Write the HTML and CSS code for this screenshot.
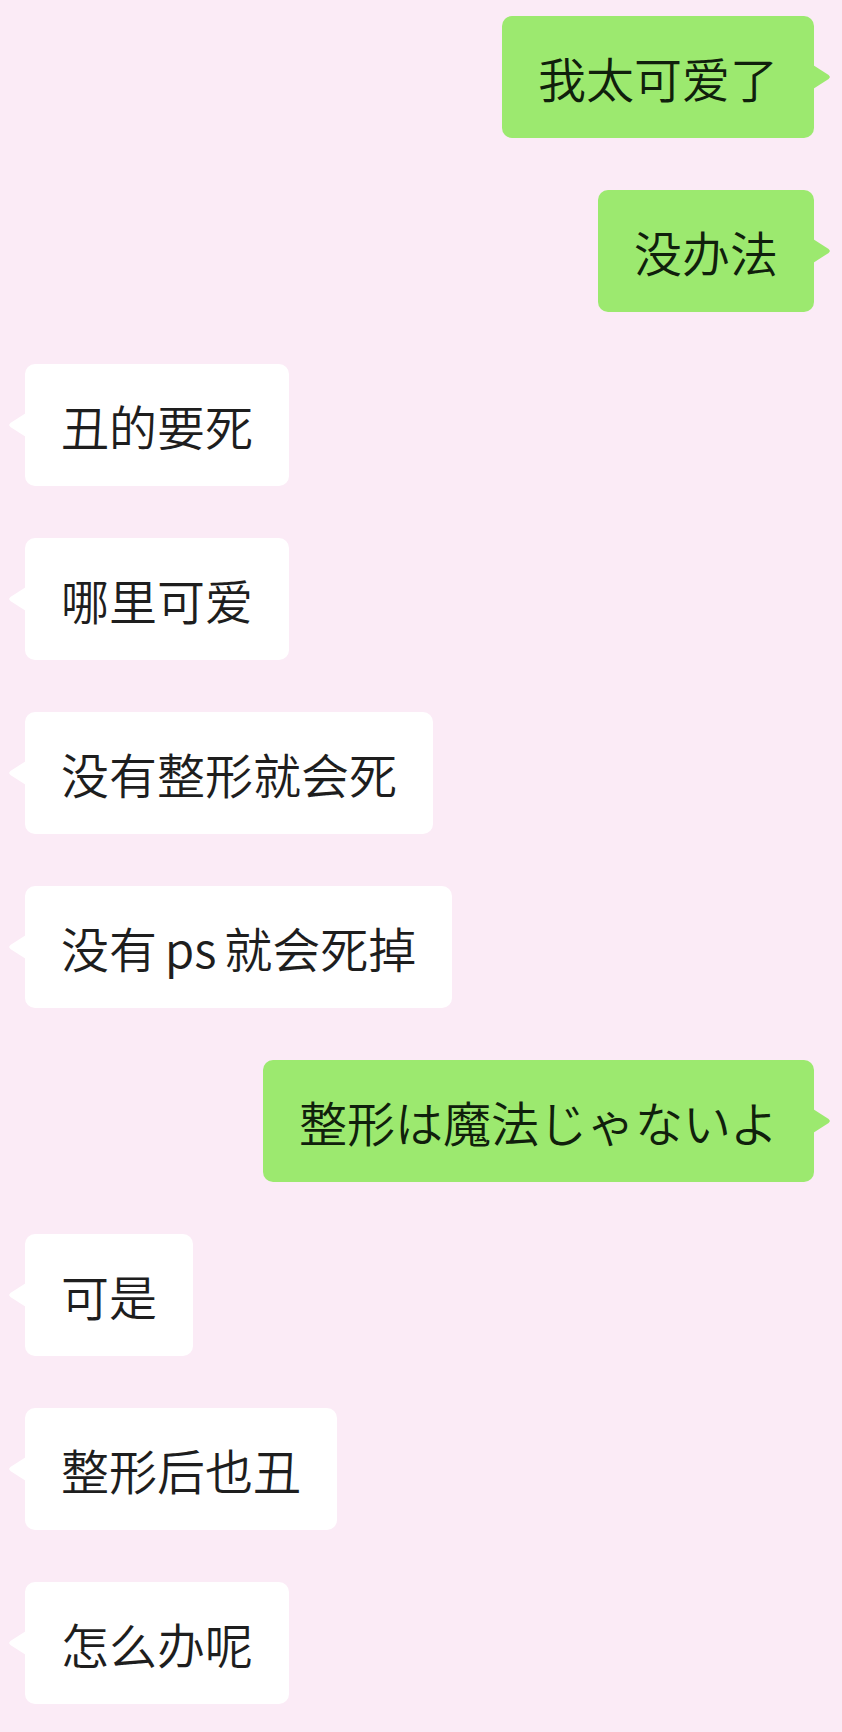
FILE: index.html
```html
<!DOCTYPE html>
<html lang="zh-CN">
<head>
	<meta charset="UTF-8">
	<title>聊天</title>
	<link rel="stylesheet" href="styles.css">
</head>
<body>
<div class="chat">
  <div class="row me"><div class="bubble">我太可爱了</div></div>
  <div class="row me"><div class="bubble">没办法</div></div>
  <div class="row you"><div class="bubble">丑的要死</div></div>
  <div class="row you"><div class="bubble">哪里可爱</div></div>
  <div class="row you"><div class="bubble">没有整形就会死</div></div>
  <div class="row you"><div class="bubble">没有 ps 就会死掉</div></div>
  <div class="row me"><div class="bubble" lang="ja">整形は魔法じゃないよ</div></div>
  <div class="row you"><div class="bubble">可是</div></div>
  <div class="row you"><div class="bubble">整形后也丑</div></div>
  <div class="row you"><div class="bubble">怎么办呢</div></div>
</div>
</body>
</html>
```

FILE: styles.css
```css
* {
  margin: 0;
  padding: 0
}

body {
  background-color: #fbebf6;
  font-family: "Noto Sans CJK SC", "Noto Sans CJK JP", sans-serif;
}

.chat {
  display: flex;
  flex-direction: column;
  gap: 52px;
  padding: 16px 28px 0 25px;
}

.row {
  display: flex;
}

.row.me {
  justify-content: flex-end;
}

.bubble {
  position: relative;
  padding: 28px 36px;
  font-size: 48px;
  font-weight: 350;
  line-height: 66px;
  word-spacing: -3px;
  color: #1e1e1e;
  background-color: #fff;
  border-radius: 10px;
  white-space: nowrap;
}

.me .bubble {
  background-color: #9ce96f;
  color: #10200c;
}

/* 气泡的小三角 */
.bubble::after {
  content: "";
  position: absolute;
  top: 50%;
  width: 17px;
  height: 24px;
  margin-top: -12px;
  background-color: inherit;
}

.me .bubble::after {
  right: -16px;
  clip-path: polygon(0 0, 92% 42%, 100% 50%, 92% 58%, 0 100%);
}

.you .bubble::after {
  left: -16px;
  clip-path: polygon(100% 0, 8% 42%, 0 50%, 8% 58%, 100% 100%);
}
```
